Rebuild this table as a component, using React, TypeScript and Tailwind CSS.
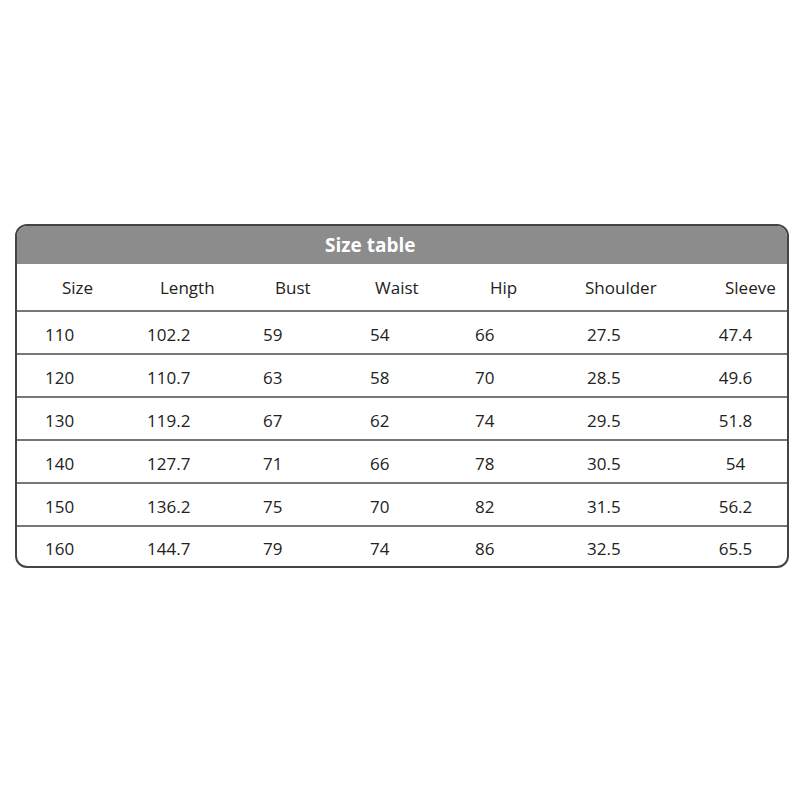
const headers = ["Size", "Length", "Bust", "Waist", "Hip", "Shoulder", "Sleeve"];

const rows = [
  ["110", "102.2", "59", "54", "66", "27.5", "47.4"],
  ["120", "110.7", "63", "58", "70", "28.5", "49.6"],
  ["130", "119.2", "67", "62", "74", "29.5", "51.8"],
  ["140", "127.7", "71", "66", "78", "30.5", "54"],
  ["150", "136.2", "75", "70", "82", "31.5", "56.2"],
  ["160", "144.7", "79", "74", "86", "32.5", "65.5"],
];

// per-column offsets, read off the picture
const headPad = ["pl-[45px]", "pl-[20px]", "pl-[20px]", "pl-[15px]", "pl-[25px]", "pl-[10px]", "pl-[35px]"];
const cellPad = ["pl-[28px]", "pl-[7px]", "pl-[8px]", "pl-[10px]", "pl-[10px]", "pl-[12px]", "justify-center pr-[6px]"];

const grid = "grid grid-cols-[123px_115px_105px_105px_110px_115px_1fr]";

export default function App() {
  return (
    <div className="h-[800px] w-[800px] bg-white pt-[224px] pl-[15px] font-['Open_Sans',sans-serif] text-[#222]">
      <div className="w-[774px] overflow-hidden rounded-[12px] border-2 border-[#444]">
        <div className="flex h-[38px] items-center bg-[#8c8c8c] pl-[308px] text-[19px] font-bold text-white">
          Size table
        </div>
        <div className={`${grid} h-[48px] border-b-2 border-[#777] text-[17px]`}>
          {headers.map((h, i) => (
            <div key={h} className={`flex items-center pt-[2px] ${headPad[i]}`}>
              {h}
            </div>
          ))}
        </div>
        {rows.map((r, ri) => (
          <div
            key={r[0]}
            className={`${grid} ${ri === rows.length - 1 ? "h-[39px]" : "h-[43px] border-b-2 border-[#777]"} text-[17px]`}
          >
            {r.map((c, i) => (
              <div key={i} className={`flex items-center pt-[4px] ${cellPad[i]}`}>
                {c}
              </div>
            ))}
          </div>
        ))}
      </div>
    </div>
  );
}
